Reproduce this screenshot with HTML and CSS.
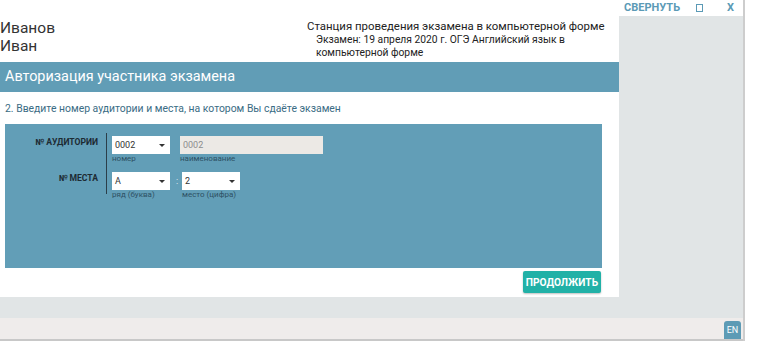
FILE: index.html
```html
<!DOCTYPE html>
<html lang="ru">
<head>
    <meta charset="UTF-8">
    <meta name="viewport" content="width=device-width, initial-scale=1.0">
    <title>Станция проведения экзамена</title>
    <link rel="stylesheet" href="styles.css">
</head>
<body>
    <div class="window">
        <div class="workspace">
            <main class="panel">
                <!-- Header -->
                <header class="panel-head">
                    <div class="person">Иванов<br>Иван</div>
                    <div class="station">
                        <div class="station-title">Станция проведения экзамена в компьютерной форме</div>
                        <div class="station-exam">Экзамен: 19 апреля 2020 г. ОГЭ Английский язык в<br>компьютерной форме</div>
                    </div>
                </header>

                <h1 class="section-title">Авторизация участника экзамена</h1>
                <p class="step">2. Введите номер аудитории и места, на котором Вы сдаёте экзамен</p>

                <!-- Form -->
                <section class="form-box">
                    <div class="form-grid">
                        <div class="form-labels">
                            <div class="form-label">№ АУДИТОРИИ</div>
                            <div class="form-label">№ МЕСТА</div>
                        </div>
                        <div class="form-fields">
                            <div class="field-row">
                                <div class="field">
                                    <div class="select">0002<span class="caret"></span></div>
                                    <div class="caption">номер</div>
                                </div>
                                <div class="field">
                                    <div class="text-input">0002</div>
                                    <div class="caption">наименование</div>
                                </div>
                            </div>
                            <div class="field-row">
                                <div class="field">
                                    <div class="select">А<span class="caret"></span></div>
                                    <div class="caption">ряд (буква)</div>
                                </div>
                                <span class="colon">:</span>
                                <div class="field">
                                    <div class="select">2<span class="caret"></span></div>
                                    <div class="caption">место (цифра)</div>
                                </div>
                            </div>
                        </div>
                    </div>
                </section>

                <div class="actions">
                    <button class="next-btn">ПРОДОЛЖИТЬ</button>
                </div>
            </main>

            <aside class="side">
                <div class="titlebar">
                    <span class="tb-btn">СВЕРНУТЬ</span>
                    <span class="tb-square"></span>
                    <span class="tb-btn tb-close">X</span>
                </div>
            </aside>
        </div>

        <div class="gap"></div>

        <footer class="statusbar">
            <span class="lang">EN</span>
        </footer>
    </div>
</body>
</html>
```

FILE: styles.css
```css
/* General Reset */
* {
    margin: 0;
    padding: 0;
    box-sizing: border-box;
    font-family: Roboto, "Liberation Sans", sans-serif;
}

body {
    background-color: #fff;
    color: #333;
}

.window {
    width: 745px;
    border-right: 2px solid #cdcdcd;
    background-color: #e1e5e6;
}

.workspace {
    display: flex;
    height: 297px;
}

/* Main panel */
.panel {
    width: 619px;
    background-color: #fff;
}

.panel-head {
    display: flex;
    justify-content: space-between;
    height: 62px;
}

.person {
    padding-top: 19px;
    font-size: 15.5px;
    line-height: 18px;
    color: #333;
}

.station {
    width: 306px;
    margin-right: 6px;
    padding-top: 20px;
    color: #222;
    white-space: nowrap;
}

.station-title {
    font-size: 11.4px;
    line-height: 13px;
}

.station-exam {
    margin-left: 9px;
    font-size: 10.3px;
    line-height: 13px;
}

.section-title {
    height: 30px;
    padding-left: 5px;
    background-color: #619db6;
    color: #fff;
    font-size: 14.4px;
    font-weight: normal;
    line-height: 30px;
}

.step {
    margin: 10px 0 9px 5px;
    font-size: 10.4px;
    line-height: 13px;
    color: #3a6c84;
}

/* Form */
.form-box {
    height: 144px;
    margin: 0 17px 0 5px;
    padding-top: 12px;
    background-color: #629eb7;
}

.form-grid {
    display: flex;
}

.form-labels {
    width: 93px;
    text-align: right;
}

.form-label {
    height: 36px;
    font-size: 8.6px;
    font-weight: bold;
    line-height: 12px;
    color: #1d2b33;
}

.form-fields {
    margin-left: 8px;
    margin-top: -3px;
    padding: 3px 0 0 5px;
    height: 61px;
    border-left: 1px solid #2b3e49;
}

.field-row {
    display: flex;
    align-items: flex-start;
    height: 36px;
}

.field {
    margin-right: 10px;
}

.select,
.text-input {
    position: relative;
    height: 18px;
    padding-left: 3px;
    font-size: 9px;
    line-height: 18px;
    background-color: #fff;
    color: #333;
}

.select {
    width: 58px;
}

.caret {
    position: absolute;
    right: 5px;
    top: 8px;
    border-left: 3px solid transparent;
    border-right: 3px solid transparent;
    border-top: 3px solid #333;
}

.text-input {
    width: 143px;
    background-color: #ece9e5;
    color: #8d8d8d;
}

.caption {
    font-size: 8px;
    line-height: 10px;
    color: #2e5164;
}

.colon {
    width: 10px;
    margin-left: -8px;
    font-size: 9px;
    line-height: 18px;
    color: #eef5f8;
    text-align: center;
}

.actions {
    display: flex;
    justify-content: flex-end;
    padding: 3px 18px 0 0;
}

.next-btn {
    height: 22px;
    padding: 0 3px;
    border: none;
    border-radius: 2px;
    background-color: #21b1a7;
    color: #fff;
    font-size: 10.2px;
    font-weight: bold;
    box-shadow: 0 1px 2px rgba(0, 0, 0, 0.25);
}

/* Side column */
.side {
    flex: 1;
}

.titlebar {
    display: flex;
    align-items: center;
    height: 16px;
    padding-left: 5px;
    background-color: #fff;
}

.tb-btn {
    font-size: 11px;
    font-weight: bold;
    line-height: 12px;
    color: #5b9ab6;
}

.tb-square {
    width: 7px;
    height: 8px;
    margin: 0 24px 0 16px;
    border: 1.5px solid #5b9ab6;
}

/* Bottom bars */
.gap {
    height: 21px;
}

.statusbar {
    display: flex;
    justify-content: flex-end;
    align-items: flex-end;
    height: 23px;
    padding-right: 2px;
    background-color: #efeceb;
    border-bottom: 2px solid #c8c8c8;
}

.lang {
    width: 17px;
    height: 18px;
    border-radius: 3px 3px 0 0;
    background-color: #5d9bb5;
    color: #fff;
    font-size: 9px;
    line-height: 18px;
    text-align: center;
}
```
